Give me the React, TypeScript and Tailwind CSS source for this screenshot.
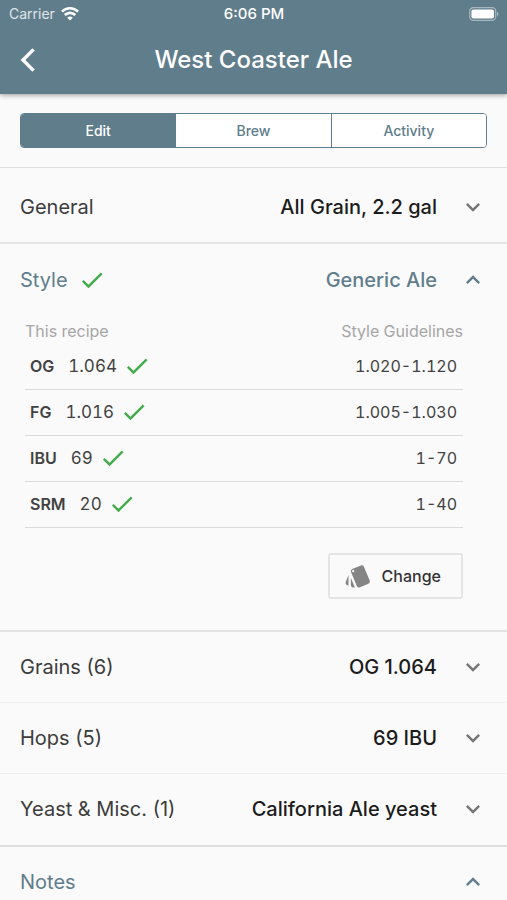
import type { ReactNode } from "react";
import { MdCheck, MdExpandLess, MdExpandMore, MdStyle } from "react-icons/md";

type Measure = { label: string; value: string; range: string };

const measures: Measure[] = [
  { label: "OG", value: "1.064", range: "1.020-1.120" },
  { label: "FG", value: "1.016", range: "1.005-1.030" },
  { label: "IBU", value: "69", range: "1-70" },
  { label: "SRM", value: "20", range: "1-40" },
];

function StatusBar() {
  return (
    <div className="grid h-7 grid-cols-3 items-center pr-2 pl-[9px] text-sm">
      <div className="flex items-center gap-1.5 text-white/80">
        <span>Carrier</span>
        <svg viewBox="0 0 18 14" className="h-3.5 w-[18px]" fill="none" stroke="white" strokeWidth="2.6">
          <path d="M1 4.6a11.4 11.4 0 0 1 16 0" />
          <path d="M3.8 8a7.4 7.4 0 0 1 10.4 0" />
          <path d="M9 13.6 6.2 10.8a4 4 0 0 1 5.6 0Z" fill="white" stroke="none" />
        </svg>
      </div>
      <span className="text-center text-[15px] font-medium">6:06 PM</span>
      <svg viewBox="0 0 30 14" className="h-3.5 w-[30px] justify-self-end">
        <rect x="0.7" y="0.7" width="26" height="12.6" rx="3.6" fill="none" stroke="white" strokeOpacity="0.45" strokeWidth="1.2" />
        <rect x="2.4" y="2.4" width="22.6" height="9.2" rx="2" fill="white" />
        <path d="M28 4.8c1.8.8 1.8 3.6 0 4.4Z" fill="white" fillOpacity="0.5" />
      </svg>
    </div>
  );
}

function Tab({ children, active = false }: { children: ReactNode; active?: boolean }) {
  return (
    <button
      type="button"
      role="tab"
      aria-selected={active}
      className={
        active
          ? "flex-1 bg-[#607d8b] text-sm font-medium text-white"
          : "flex-1 border-l border-[#607d8b] bg-white text-sm font-medium text-[#607d8b]"
      }
    >
      {children}
    </button>
  );
}

function SectionRow({
  title,
  value,
  open = false,
  checked = false,
}: {
  title: string;
  value?: string;
  open?: boolean;
  checked?: boolean;
}) {
  return (
    <button
      type="button"
      aria-expanded={open}
      className={
        open
          ? "flex h-[71px] w-full items-center pr-5 pl-5 text-left text-xl text-[#607d8b]"
          : "flex h-[71px] w-full items-center pr-5 pl-5 text-left text-xl text-[#3c3c3c]"
      }
    >
      <span>{title}</span>
      {checked && <MdCheck className="ml-2.5 size-7 text-[#43ab4b]" />}
      <span className={open ? "ml-auto font-medium" : "ml-auto font-medium text-[#1c1c1c]"}>{value}</span>
      {open ? (
        <MdExpandLess className="ml-[22px] size-7" />
      ) : (
        <MdExpandMore className="ml-[22px] size-7 text-[#757575]" />
      )}
    </button>
  );
}

export default function App() {
  return (
    <div className="h-screen overflow-hidden bg-[#fafafa] font-['Inter',sans-serif]">
      <header className="relative h-[94px] bg-[#607d8b] text-white shadow-[0_1px_5px_rgba(0,0,0,0.4)]">
        <StatusBar />
        <div className="grid h-16 grid-cols-[56px_1fr_56px] items-center">
          <button type="button" aria-label="Back" className="flex h-full items-center pl-5">
            <svg viewBox="0 0 16 24" className="h-6 w-4" fill="none" stroke="currentColor" strokeWidth="3.4">
              <path d="M13.6 1.4 3 12l10.6 10.6" />
            </svg>
          </button>
          <h1 className="text-center text-2xl font-medium">West Coaster Ale</h1>
        </div>
      </header>

      <div className="border-b border-[#e0e0e0] px-5 py-[19px]">
        <div role="tablist" className="flex h-[35px] overflow-hidden rounded border border-[#607d8b]">
          <Tab active>Edit</Tab>
          <Tab>Brew</Tab>
          <Tab>Activity</Tab>
        </div>
      </div>

      <main>
        <section className="border-b-2 border-[#e4e4e4] pt-[3px]">
          <SectionRow title="General" value="All Grain, 2.2 gal" />
        </section>

        <section className="border-b-2 border-[#e2e2e2]">
          <SectionRow title="Style" value="Generic Ale" open checked />
          <div className="pt-1 pr-11 pb-[31px] pl-[25px]">
            <table className="w-full text-[17px] text-[#424242] tabular-nums">
              <thead>
                <tr className="h-6 text-base text-[#a6a6a6]">
                  <th className="text-left font-normal">This recipe</th>
                  <th className="text-right font-normal">Style Guidelines</th>
                </tr>
              </thead>
              <tbody>
                {measures.map((m) => (
                  <tr key={m.label} className="h-[46px] border-b border-[#dadada]">
                    <td className="pl-[5px]">
                      <div className="flex items-center leading-6">
                        <span className="text-base leading-6 font-semibold">{m.label}</span>
                        <span className="ml-3.5">{m.value}</span>
                        <MdCheck className="ml-1.5 size-7 text-[#43ab4b]" />
                      </div>
                    </td>
                    <td className="pr-1.5 text-right text-base leading-6">{m.range}</td>
                  </tr>
                ))}
              </tbody>
            </table>
            <div className="flex justify-end pt-[25px]">
              <button
                type="button"
                className="flex h-[46px] items-center gap-2.5 rounded-[3px] border-2 border-[#e4e4e4] pr-5 pl-3.5 text-base font-medium text-[#333]"
              >
                <MdStyle className="size-7 text-[#858585]" />
                Change
              </button>
            </div>
          </div>
        </section>

        <section className="border-b-2 border-[#e0e0e0]">
          <div className="divide-y divide-[#eeeeee]">
            <SectionRow title="Grains (6)" value="OG 1.064" />
            <SectionRow title="Hops (5)" value="69 IBU" />
            <SectionRow title="Yeast & Misc. (1)" value="California Ale yeast" />
          </div>
        </section>

        <section>
          <SectionRow title="Notes" open />
        </section>
      </main>
    </div>
  );
}
